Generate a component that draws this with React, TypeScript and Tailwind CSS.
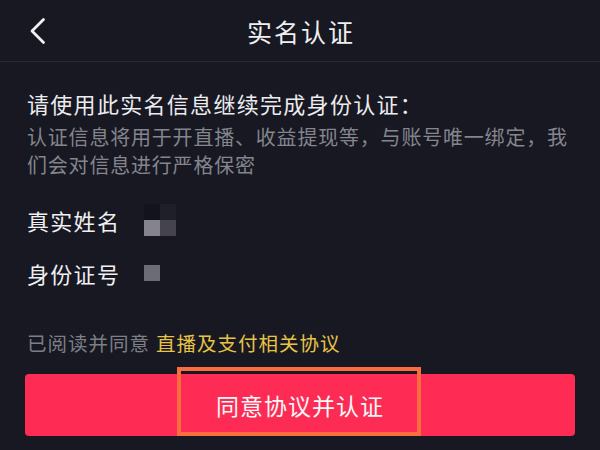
import React from 'react'

const cjk = { fontFamily: '"Noto Sans CJK SC", "Noto Sans", sans-serif' }

const Mosaic = ({ cells }: { cells: string[][] }) => (
  <div className='flex flex-col'>
    {cells.map((row, i) => (
      <div key={i} className='flex'>
        {row.map((c, j) => (
          <div key={j} className='w-4 h-4' style={{ backgroundColor: c }} />
        ))}
      </div>
    ))}
  </div>
)

const App = () => {
  return (
    <div className='relative w-[600px] h-[450px] bg-[#171822] overflow-hidden' style={cjk}>
      {/* header */}
      <div className='grid grid-cols-[1fr_auto_1fr] items-center h-[62px] border-b border-[#272833]'>
        <div className='pl-[28px] pt-[1px]'>
          <svg width='20' height='28' viewBox='0 0 20 28' fill='none'>
            <path d='M15.5 2.5 L4 14 L15.5 25.5' stroke='#f2f2f2' strokeWidth='2.8' strokeLinecap='round' strokeLinejoin='round' />
          </svg>
        </div>
        <h1 className='text-[25px] leading-[30px] tracking-[2px] text-[#efeff1] pl-[2px]'>实名认证</h1>
        <div />
      </div>

      <div className='px-[27px]'>
        <h2 className='mt-[26px] text-[22px] leading-[30px] tracking-[1.3px] text-[#ececee]'>
          请使用此实名信息继续完成身份认证：
        </h2>
        <p className='mt-[5px] text-[20px] leading-[28px] tracking-[0.8px] text-[#84858d]'>
          认证信息将用于开直播、收益提现等，与账号唯一绑定，我们会对信息进行严格保密
        </p>

        <div className='mt-[25px] flex flex-col gap-[21px]'>
          <div className='flex items-center h-[32px]'>
            <span className='w-[117px] text-[22px] tracking-[1.3px] text-[#f0f0f2]'>真实姓名</span>
            <Mosaic cells={[['#13131d', '#1f1f29'], ['#85848e', '#45444e']]} />
          </div>
          <div className='flex items-center h-[32px]'>
            <span className='w-[117px] text-[22px] tracking-[1.3px] text-[#f0f0f2]'>身份证号</span>
            <Mosaic cells={[['#6d6c75']]} />
          </div>
        </div>

        <p className='mt-[40px] text-[19.5px] leading-[28px] tracking-[1px]'>
          <span className='text-[#7d7e86]'>已阅读并同意</span>
          <span className='ml-[6px] text-[#e8c446]'>直播及支付相关协议</span>
        </p>
      </div>

      <div className='mx-[25px] mt-[17px]'>
        <button className='w-full h-[62px] rounded-[4px] bg-[#fe2c55] text-[23px] tracking-[1px] text-[#f7f7f7]'>
          同意协议并认证
        </button>
      </div>

      {/* annotation box */}
      <div className='absolute left-[177px] top-[367px] w-[244px] h-[69px] border-[4px] border-[#fb6c3e]' />
    </div>
  )
}

export default App
